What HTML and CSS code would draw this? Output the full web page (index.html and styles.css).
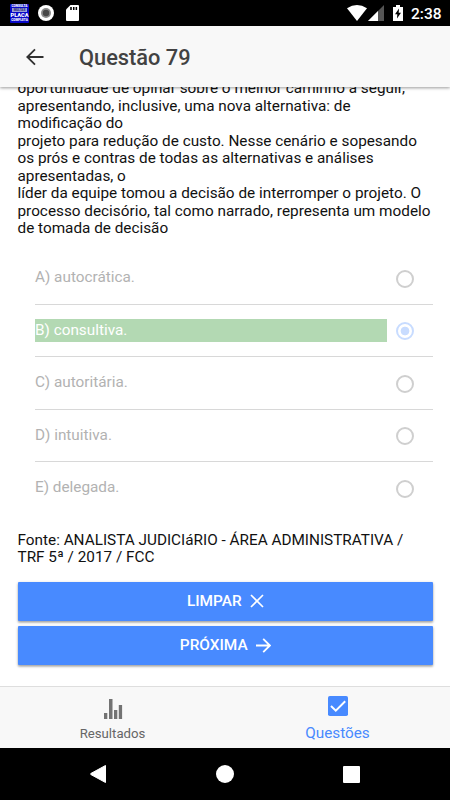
FILE: index.html
```html
<!DOCTYPE html>
<html lang="pt-BR">
<head>
<meta charset="utf-8">
<title>Questão 79</title>
<link rel="stylesheet" href="styles.css">
</head>
<body>
<div class="status">
  <div class="app-icon"><span class="tiny">CONSULTA</span><span class="band">MULTAS</span><span class="placa">PLACA</span><span class="tiny">COMPLETA</span></div>
  <svg class="record" width="16" height="16" viewBox="0 0 16 16"><circle cx="8" cy="8" r="8" fill="#fff"/><circle cx="8" cy="8" r="5" fill="#8b8b8b"/><circle cx="8" cy="8" r="3.2" fill="#484848"/></svg>
  <svg class="sd" width="13" height="16" viewBox="0 0 13 16"><path d="M4.500 0H12a1 1 0 0 1 1 1v14a1 1 0 0 1-1 1H1a1 1 0 0 1-1-1V4.500z" fill="#fff"/><path d="M4.200 2h1.600v3H4.200zM7 2h1.500v3H7zM9.600 2h1.500v3H9.600z" fill="#000"/></svg>
  <span class="spacer"></span>
  <svg class="wifi" width="20" height="16" viewBox="0 0 20 16"><path d="M0 3.300Q10-3.300 20 3.300L10 16z" fill="#fff"/></svg>
  <svg class="signal" width="16" height="16" viewBox="0 0 16 16"><path d="M0 16L16 0v16z" fill="#555"/><path d="M0 16L10 6v10z" fill="#fff"/></svg>
  <svg class="battery" width="10" height="16" viewBox="0 0 10 16"><path d="M0 2h3V0h4v2h3v14H0z" fill="#fff"/><path d="M6 3.500L2 9.300h2.300L4 13.500l4-5.800H5.700z" fill="#000"/></svg>
  <span class="clock">2:38</span>
</div>
<header class="header">
  <svg width="18" height="18" viewBox="0 0 18 18"><path d="M17.500 9H1.500M9 1.300L1.300 9 9 16.700" fill="none" stroke="#303030" stroke-width="1.800"/></svg>
  <h1>Questão 79</h1>
</header>
<main class="content">
  <p class="question">oportunidade de opinar sobre o melhor caminho a seguir,<br>apresentando, inclusive, uma nova alternativa: de<br>modificação do<br>projeto para redução de custo. Nesse cenário e sopesando<br>os prós e contras de todas as alternativas e análises<br>apresentadas, o<br>líder da equipe tomou a decisão de interromper o projeto. O<br>processo decisório, tal como narrado, representa um modelo<br>de tomada de decisão</p>
  <div class="options">
    <div class="option"><span class="label">A) autocrática.</span><i class="radio"></i></div>
    <div class="option selected"><span class="label">B) consultiva.</span><i class="radio"></i></div>
    <div class="option"><span class="label">C) autoritária.</span><i class="radio"></i></div>
    <div class="option"><span class="label">D) intuitiva.</span><i class="radio"></i></div>
    <div class="option"><span class="label">E) delegada.</span><i class="radio"></i></div>
  </div>
  <p class="source">Fonte: ANALISTA JUDICIáRIO - ÁREA ADMINISTRATIVA /<br>TRF 5ª / 2017 / FCC</p>
  <div class="button"><span>LIMPAR</span><svg width="14" height="14" viewBox="0 0 14 14"><path d="M1 1l12 12M13 1L1 13" stroke="#fff" stroke-width="1.700"/></svg></div>
  <div class="button"><span>PRÓXIMA</span><svg width="15" height="15" viewBox="0 0 15 15"><path d="M0 7.500h14M7.200 .8l6.700 6.700-6.700 6.700" fill="none" stroke="#fff" stroke-width="1.800"/></svg></div>
</main>
<nav class="tabs">
  <div class="tab"><svg width="20" height="22" viewBox="0 0 20 22"><path d="M1 15h3.300v6H1zM6 1h3.500v20H6zM11 12h3.300v9H11zM15.800 7h3.300v14h-3.300z" fill="#737373"/></svg><span>Resultados</span></div>
  <div class="tab active"><svg width="20" height="20" viewBox="0 0 20 20"><rect width="20" height="20" rx="1.800" fill="#488aff"/><path d="M3 10l4.800 4.700L17.200 5.300" fill="none" stroke="#fff" stroke-width="2"/></svg><span>Questões</span></div>
</nav>
<div class="navbar">
  <svg width="16" height="18" viewBox="0 0 16 18"><path d="M15.500 .5v17L.8 9.500V8.500z" fill="#fff" stroke="#fff" stroke-linejoin="round"/></svg>
  <i class="home"></i>
  <i class="recent"></i>
</div>
</body>
</html>
```

FILE: styles.css
```css
* { box-sizing: border-box; }
body {
  margin: 0;
  width: 450px;
  height: 800px;
  overflow: hidden;
  display: flex;
  flex-direction: column;
  background: #fff;
  color: #111;
  font-family: Roboto, "Liberation Sans", sans-serif;
  font-size: 15.32px;
}
h1, p { margin: 0; }
svg { display: block; flex: none; }

.status {
  height: 26px;
  flex: none;
  background: #000;
  display: flex;
  align-items: center;
  padding: 0 8px 0 10px;
}
.app-icon {
  width: 19px;
  height: 19px;
  background: #0808c8;
  color: #fff;
  display: flex;
  flex-direction: column;
  align-items: center;
  justify-content: center;
  border-radius: 1px;
  font-weight: 900;
  overflow: hidden;
}
.tiny { font-size: 3.2px; line-height: 4px; }
.band { font-size: 3px; line-height: 4px; width: 15px; text-align: center; background: #9aa0d8; color: #303080; }
.placa { font-size: 5.6px; line-height: 6px; }
.record { margin-left: 9px; }
.sd { margin-left: 12px; }
.spacer { flex: 1; }
.signal { margin-left: 1px; }
.battery { margin-left: 9px; }
.clock {
  width: 31px;
  margin-left: 8px;
  color: #fff;
  font-size: 15.5px;
  font-weight: 500;
  line-height: 26px;
  padding-top: 2px;
}

.header {
  position: relative;
  z-index: 1;
  height: 61px;
  flex: none;
  display: flex;
  align-items: center;
  padding-left: 26px;
  background: #f8f8f8;
  box-shadow: 0 1px 3px rgba(0, 0, 0, .4);
}
.header h1 {
  margin-left: 35px;
  padding-top: 1px;
  font-size: 21.8px;
  font-weight: 500;
  color: #424242;
}

.content {
  height: 599px;
  flex: none;
  overflow: hidden;
  padding: 0 17px 0 17.5px;
}
.question {
  margin-top: -7px;
  line-height: 17.5px;
  white-space: nowrap;
}
.options {
  margin-top: 14.5px;
  padding-left: 17.5px;
}
.option {
  height: 52.5px;
  display: flex;
  align-items: center;
  border-bottom: 1px solid #d8d8d8;
  color: #b2b2b2;
}
.option:last-child { border-bottom-color: transparent; }
.label {
  width: 352px;
  height: 23px;
  line-height: 22px;
}
.selected .label {
  background: #b3d9b3;
  color: #fff;
}
.radio {
  width: 18px;
  height: 18px;
  margin: 2px 0 0 8.5px;
  border: 2px solid #cfcfcf;
  border-radius: 50%;
}
.selected .radio {
  border-color: #c8dcff;
  background: radial-gradient(circle, #c8dcff 4px, transparent 4.7px);
}
.source {
  margin-top: 17px;
  line-height: 17.5px;
  white-space: nowrap;
}
.button {
  height: 39px;
  margin-bottom: 5px;
  display: flex;
  align-items: center;
  justify-content: center;
  gap: 8px;
  background: #488aff;
  border-radius: 1px;
  color: #fff;
  font-size: 15.4px;
  font-weight: 500;
  box-shadow: 0 2px 2px rgba(0, 0, 0, .14), 0 1px 3px rgba(0, 0, 0, .3);
}
.source + .button { margin-top: 15px; }

.tabs {
  height: 62px;
  flex: none;
  display: flex;
  background: #f8f8f8;
  border-top: 1px solid #dedede;
}
.tab {
  flex: 1;
  display: flex;
  flex-direction: column;
  align-items: center;
  padding-top: 11px;
  color: #666;
  font-size: 13.2px;
}
.tab span { margin-top: 6px; line-height: 16px; }
.active { padding-top: 9px; color: #488aff; font-size: 15.3px; }
.active span { margin-top: 9px; }

.navbar {
  height: 52px;
  flex: none;
  background: #000;
  display: flex;
  align-items: center;
  justify-content: space-between;
  padding: 0 90px;
}
.home { width: 18px; height: 18px; border-radius: 50%; background: #fff; }
.recent { width: 17px; height: 17px; border-radius: 1px; background: #fff; }
```
